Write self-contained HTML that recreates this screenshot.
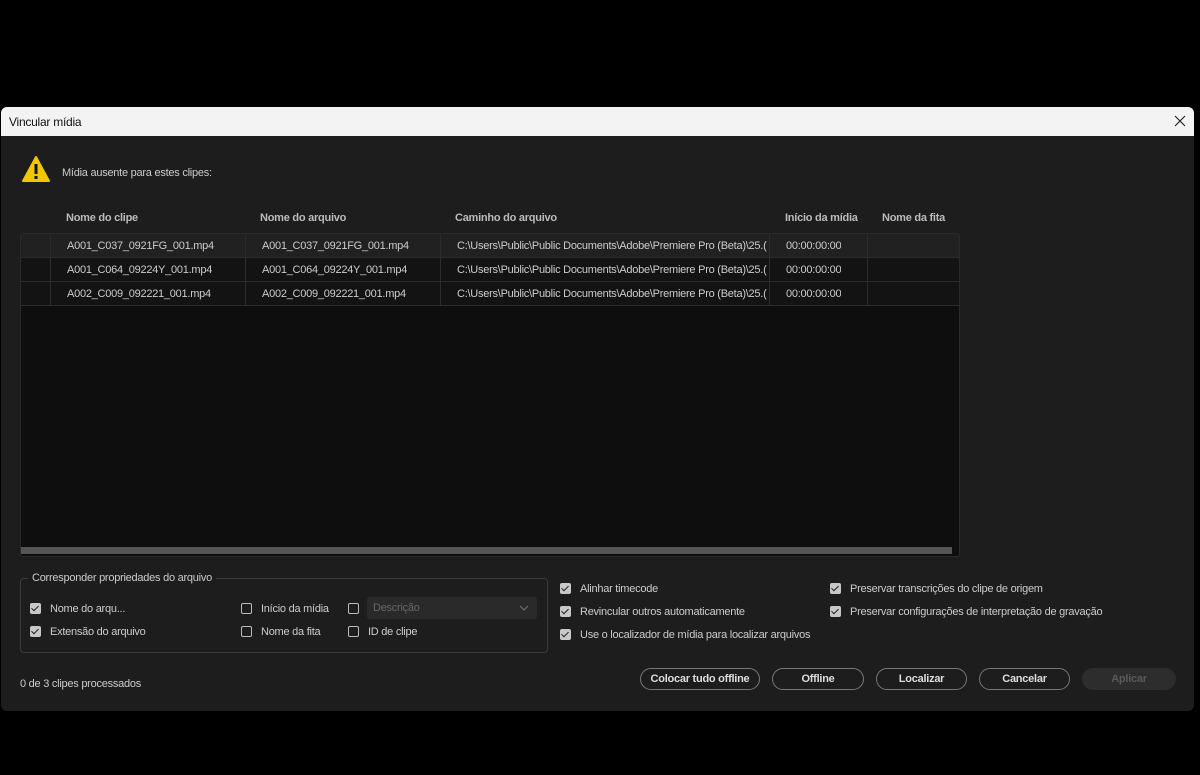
<!DOCTYPE html>
<html><head><style>
body{margin:0;width:1200px;height:775px;background:#000;font-family:"Liberation Sans",sans-serif;position:relative;overflow:hidden;font-size:11px;letter-spacing:-0.25px;color:#ccc}
.a{position:absolute}
#dlg{left:1px;top:107px;width:1193px;height:604px;background:#1d1d1d;border-radius:6px;overflow:hidden}
#title{left:0;top:0;width:1193px;height:29px;background:#f3f3f3;color:#111;font-size:12px}
.hd{color:#bbb;font-weight:bold;font-size:11px;top:105px}
#tbl{left:19px;top:126px;width:938px;height:322px;background:#0e0e0e;border:1px solid #2a2a2a;border-radius:3px}
.row{left:0;width:938px;height:23px;border-bottom:1px solid #2c2c2c;background:#131313}
.row span{position:absolute;top:6px;color:#ccc;white-space:nowrap;overflow:hidden}
.vl{top:0;width:1px;height:72px;background:#2c2c2c}
.cb{width:9px;height:9px;border:1.5px solid #bbb;border-radius:2px}
.cb.on{background:#c8c8c8;border-color:#c8c8c8}
.cb.on:after{content:"";position:absolute;left:2px;top:0px;width:3px;height:6px;border:solid #222;border-width:0 1.5px 1.5px 0;transform:rotate(45deg)}
.lb{color:#ccc}
.btn{top:561px;height:20px;border:1.5px solid #777;border-radius:12px;color:#ddd;font-weight:bold;text-align:center;line-height:20px}
</style></head><body>
<div id="dlg" class="a">
<div id="title" class="a"><span class="a" style="left:8px;top:8px">Vincular mídia</span><svg class="a" style="left:1173px;top:8px" width="12" height="12"><path d="M1 1L11 11M11 1L1 11" stroke="#222" stroke-width="1.2"/></svg></div>
<svg class="a" style="left:20px;top:48px" width="30" height="28"><path d="M15 2 L28 26 L2 26 Z" fill="#f0c800" stroke="#f0c800" stroke-linejoin="round" stroke-width="2"/><rect x="13.5" y="9" width="3" height="10" fill="#111"/><rect x="13.5" y="21" width="3" height="3" fill="#111"/></svg>
<span class="a" style="left:61px;top:60px;color:#ccc">Mídia ausente para estes clipes:</span>
<span class="a hd" style="left:65px">Nome do clipe</span>
<span class="a hd" style="left:259px">Nome do arquivo</span>
<span class="a hd" style="left:454px">Caminho do arquivo</span>
<span class="a hd" style="left:784px">Início da mídia</span>
<span class="a hd" style="left:881px">Nome da fita</span>
<div id="tbl" class="a">
<div class="a row" style="top:0;background:#212121"><span style="left:46px">A001_C037_0921FG_001.mp4</span><span style="left:241px">A001_C037_0921FG_001.mp4</span><span style="left:436px;width:312px">C:\Users\Public\Public Documents\Adobe\Premiere Pro (Beta)\25.(</span><span style="left:765px">00:00:00:00</span></div>
<div class="a row" style="top:24px"><span style="left:46px">A001_C064_09224Y_001.mp4</span><span style="left:241px">A001_C064_09224Y_001.mp4</span><span style="left:436px;width:312px">C:\Users\Public\Public Documents\Adobe\Premiere Pro (Beta)\25.(</span><span style="left:765px">00:00:00:00</span></div>
<div class="a row" style="top:48px"><span style="left:46px">A002_C009_092221_001.mp4</span><span style="left:241px">A002_C009_092221_001.mp4</span><span style="left:436px;width:312px">C:\Users\Public\Public Documents\Adobe\Premiere Pro (Beta)\25.(</span><span style="left:765px">00:00:00:00</span></div>
<div class="a vl" style="left:29px"></div><div class="a vl" style="left:224px"></div><div class="a vl" style="left:419px"></div><div class="a vl" style="left:748px"></div><div class="a vl" style="left:846px"></div>
<div class="a" style="left:0;top:313px;width:931px;height:7px;background:#555"></div>
</div>
<div class="a" style="left:19px;top:471px;width:526px;height:73px;border:1px solid #3a3a3a;border-radius:4px"></div>
<span class="a" style="left:27px;top:465px;background:#1d1d1d;padding:0 4px;color:#ccc">Corresponder propriedades do arquivo</span>
<div class="a cb on" style="left:29px;top:496px"></div><span class="a lb" style="left:49px;top:496px">Nome do arqu...</span>
<div class="a cb on" style="left:29px;top:519px"></div><span class="a lb" style="left:49px;top:519px">Extensão do arquivo</span>
<div class="a cb" style="left:240px;top:496px"></div><span class="a lb" style="left:260px;top:496px">Início da mídia</span>
<div class="a cb" style="left:240px;top:519px"></div><span class="a lb" style="left:260px;top:519px">Nome da fita</span>
<div class="a cb" style="left:347px;top:496px"></div>
<div class="a" style="left:366px;top:490px;width:170px;height:22px;background:#2a2a2a;border-radius:3px"><span class="a" style="left:6px;top:5px;color:#666">Descrição</span><svg class="a" style="left:152px;top:8px" width="10" height="6"><path d="M1 1L5 5L9 1" stroke="#666" fill="none" stroke-width="1.3"/></svg></div>
<div class="a cb" style="left:347px;top:519px"></div><span class="a lb" style="left:367px;top:519px">ID de clipe</span>
<div class="a cb on" style="left:559px;top:476px"></div><span class="a lb" style="left:579px;top:476px">Alinhar timecode</span>
<div class="a cb on" style="left:559px;top:499px"></div><span class="a lb" style="left:579px;top:499px">Revincular outros automaticamente</span>
<div class="a cb on" style="left:559px;top:522px"></div><span class="a lb" style="left:579px;top:522px">Use o localizador de mídia para localizar arquivos</span>
<div class="a cb on" style="left:829px;top:476px"></div><span class="a lb" style="left:849px;top:476px">Preservar transcrições do clipe de origem</span>
<div class="a cb on" style="left:829px;top:499px"></div><span class="a lb" style="left:849px;top:499px">Preservar configurações de interpretação de gravação</span>
<span class="a" style="left:19px;top:571px;color:#ccc">0 de 3 clipes processados</span>
<div class="a btn" style="left:639px;width:118px">Colocar tudo offline</div>
<div class="a btn" style="left:771px;width:90px">Offline</div>
<div class="a btn" style="left:875px;width:89px">Localizar</div>
<div class="a btn" style="left:978px;width:89px">Cancelar</div>
<div class="a btn" style="left:1081px;width:92px;border-color:#2d2d2d;background:#2d2d2d;color:#5a5a5a">Aplicar</div>
</div>
</body></html>
